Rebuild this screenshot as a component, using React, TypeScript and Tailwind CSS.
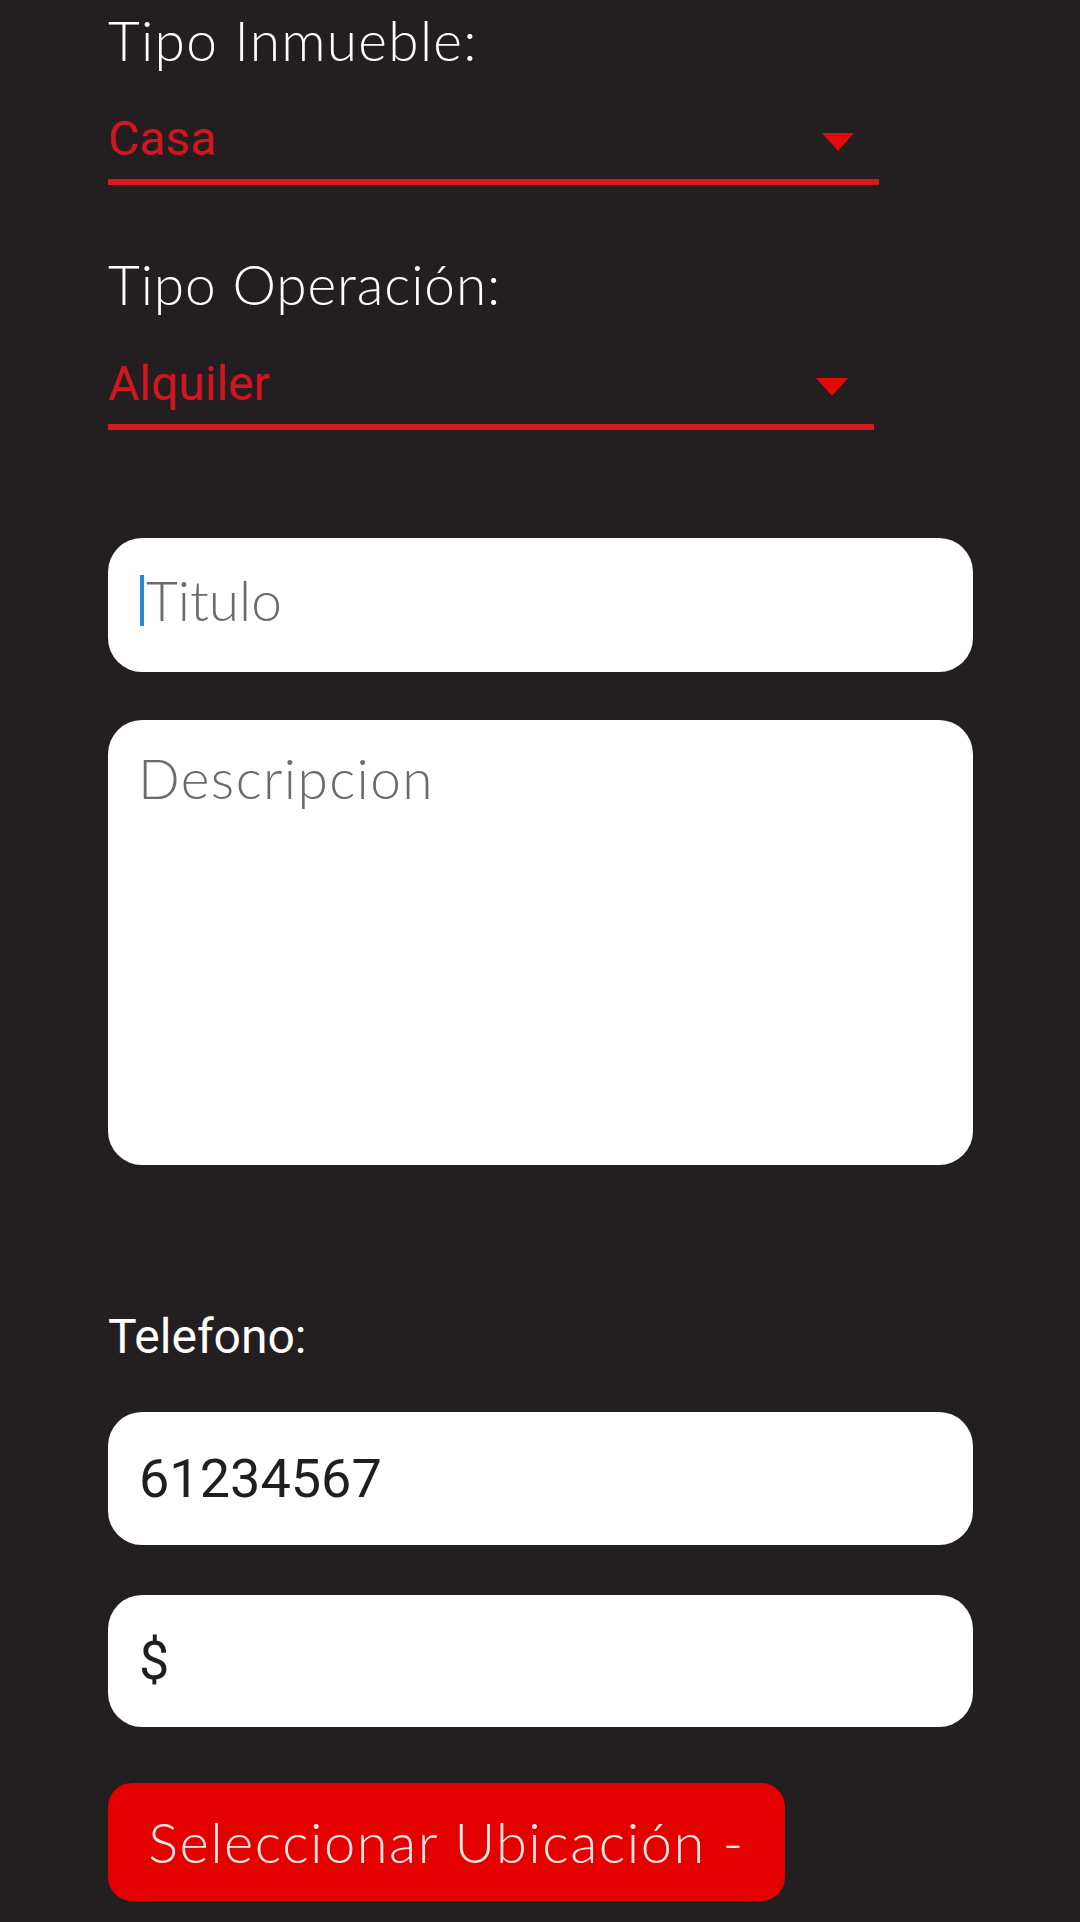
import React from "react";

const thin = "font-[Lato,'Open_Sans',sans-serif] font-light";
const roboto = "font-[Roboto,'Liberation_Sans',sans-serif]";

function Label({ children, className = "" }: { children: React.ReactNode; className?: string }) {
  return (
    <div className={`${thin} text-[55px] leading-[55px] text-white ${className}`}>{children}</div>
  );
}

function Select({ value, className = "", arrowRight = 25 }: { value: string; className?: string; arrowRight?: number }) {
  return (
    <div
      className={`flex items-start justify-between border-b-[6px] border-[#d51a1f] pb-[16px] ${className}`}
    >
      <span className={`${roboto} text-[48px] leading-[48px] text-[#d2161e]`}>{value}</span>
      <svg
        width="32"
        height="18"
        viewBox="0 0 32 18"
        className="mt-[18px]"
        style={{ marginRight: arrowRight }}
      >
        <polygon points="0,0 32,0 16,18" fill="#e30a0a" />
      </svg>
    </div>
  );
}

export default function App() {
  return (
    <div className="flex min-h-[1922px] w-full flex-col bg-[#231f20] pt-[13px] pr-[107px] pl-[108px]">
      {/* Spinners */}
      <Label className="tracking-[1.3px]">Tipo Inmueble:</Label>
      <Select value="Casa" className="mt-[47px] w-[771px]" />

      <Label className="mt-[72px] tracking-[0.9px]">Tipo Operación:</Label>
      <Select value="Alquiler" className="mt-[48px] w-[766px]" arrowRight={26} />

      {/* Text fields */}
      <div className="mt-[108px] flex h-[134px] items-center rounded-[34px] bg-white pb-[10px] pl-[32px]">
        <span className="h-[51px] w-[4px] bg-[#2a8ad4]" />
        <span className={`${thin} ml-[2px] text-[55px] leading-[55px] text-[#6b6b6b]`}>Titulo</span>
      </div>

      <div className="mt-[48px] h-[445px] rounded-[34px] bg-white pt-[31px] pl-[30px]">
        <span className={`${thin} text-[55px] leading-[55px] tracking-[1.4px] text-[#6b6b6b]`}>Descripcion</span>
      </div>

      <div className={`${roboto} mt-[148px] text-[48px] leading-[48px] text-white`}>Telefono:</div>

      <div className="mt-[51px] flex h-[133px] items-center rounded-[34px] bg-white pl-[31px]">
        <span className={`${roboto} text-[54px] leading-[54px] text-[#1f1f1f]`}>61234567</span>
      </div>

      <div className="mt-[50px] flex h-[132px] items-center rounded-[34px] bg-white pl-[31px]">
        <span className={`${roboto} text-[54px] leading-[54px] text-[#1f1f1f]`}>$</span>
      </div>

      {/* Action */}
      <button
        type="button"
        className={`${thin} mt-[56px] flex h-[118px] w-[677px] items-center justify-center rounded-[24px] bg-[#e50000] text-[56px] leading-[56px] tracking-[1.5px] text-[#fde6e6]`}
      >
        Seleccionar Ubicación -
      </button>
    </div>
  );
}
